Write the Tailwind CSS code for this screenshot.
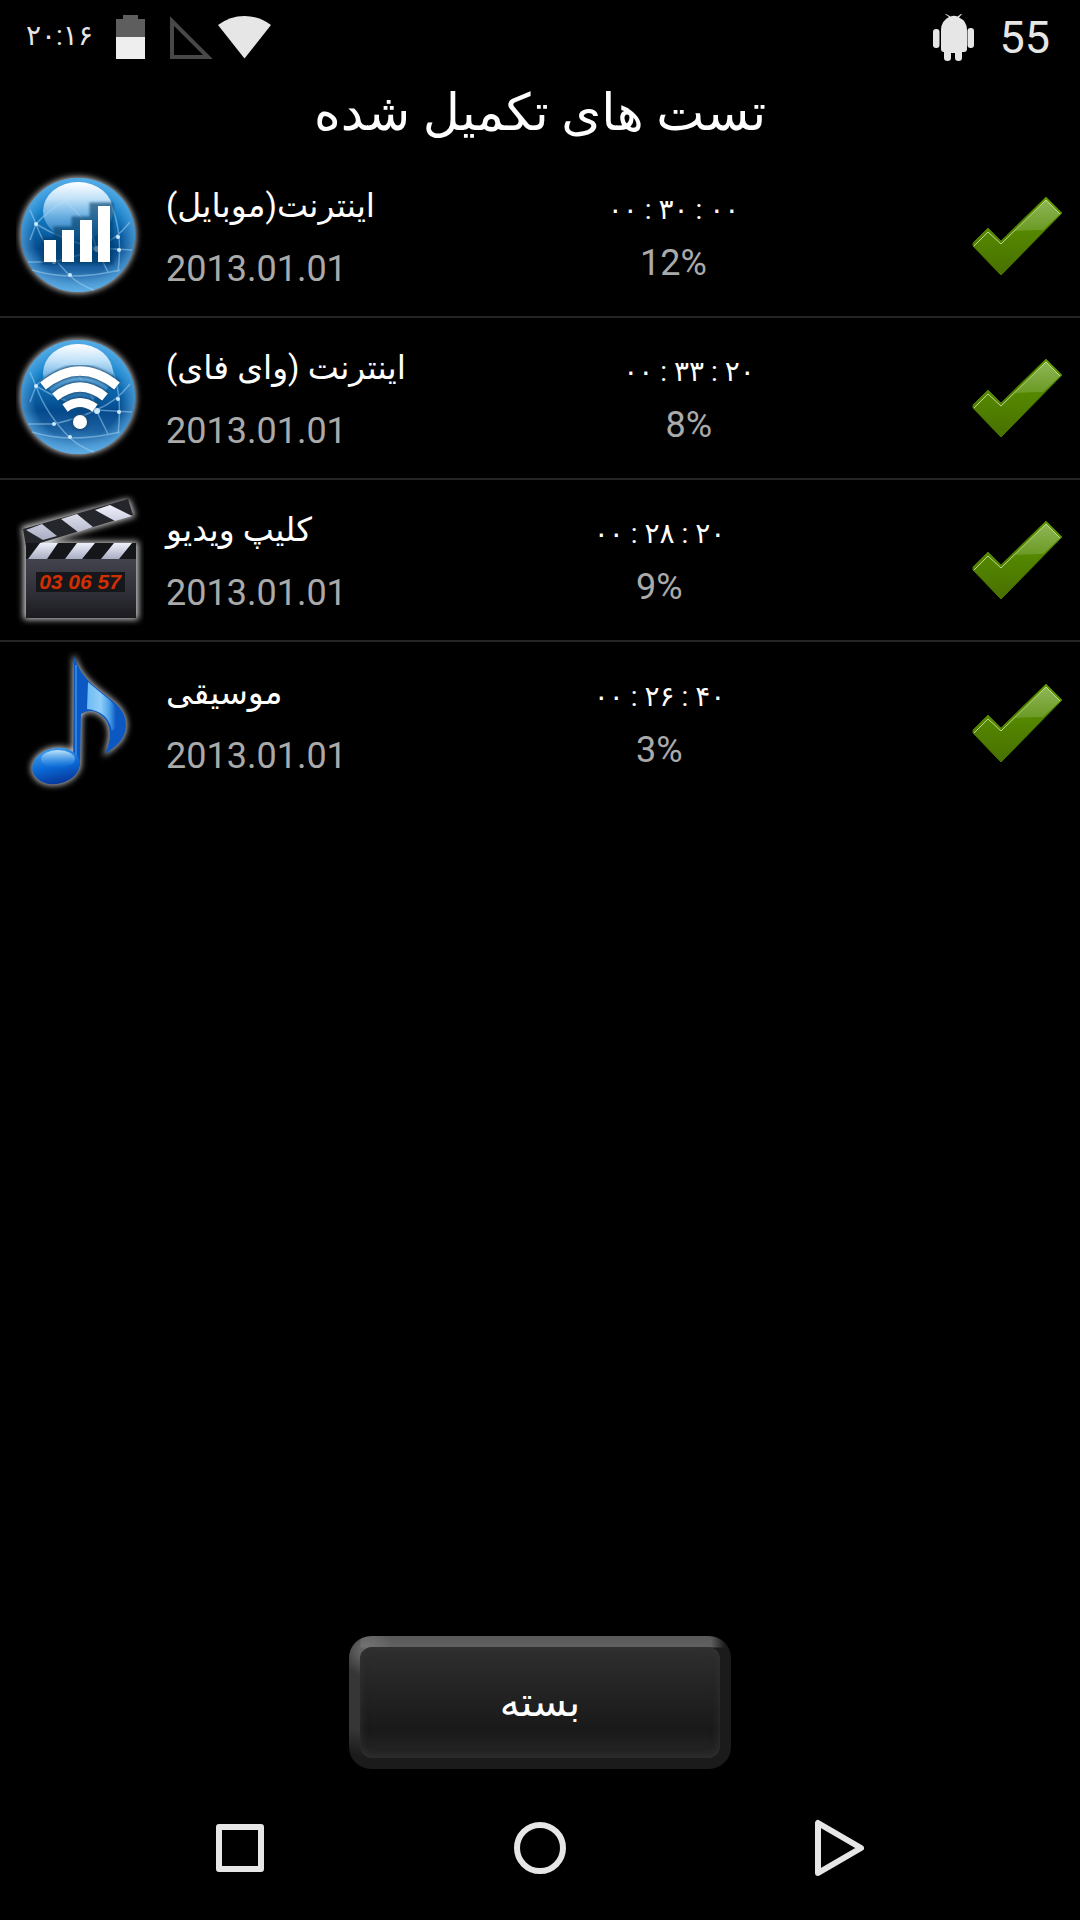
<!DOCTYPE html>
<html lang="fa">
<head>
    <meta charset="UTF-8">
    <meta name="viewport" content="width=device-width, initial-scale=1.0">
    <title>تست های تکمیل شده</title>
    <script src="https://cdn.jsdelivr.net/npm/@tailwindcss/browser@4"></script>
</head>
<body class="bg-black text-white font-[Roboto,'DejaVu_Sans',sans-serif]">

    <!-- Shared shapes -->
    <svg class="absolute size-0" aria-hidden="true">
        <defs>
            <linearGradient id="sphere" x1="0" y1="0" x2="0" y2="1">
                <stop offset="0" stop-color="#3fa3e2"/>
                <stop offset=".3" stop-color="#1580c8"/>
                <stop offset=".62" stop-color="#03498c"/>
                <stop offset=".8" stop-color="#1d63a3"/>
                <stop offset="1" stop-color="#5ba8e0"/>
            </linearGradient>
            <radialGradient id="rim">
                <stop offset=".75" stop-color="#5fb0e8" stop-opacity="0"/>
                <stop offset="1" stop-color="#5fb0e8" stop-opacity=".65"/>
            </radialGradient>
            <linearGradient id="gloss" x1="0" y1="0" x2="0" y2="1">
                <stop offset="0" stop-color="#fff"/>
                <stop offset=".3" stop-color="#c6e4fa" stop-opacity=".95"/>
                <stop offset="1" stop-color="#4fa0de" stop-opacity=".3"/>
            </linearGradient>
            <linearGradient id="tick" x1="0" y1="0" x2="0" y2="1">
                <stop offset="0" stop-color="#5f9a00"/>
                <stop offset="1" stop-color="#487000"/>
            </linearGradient>
            <linearGradient id="tickShine" x1="0" y1="0" x2="0" y2="1">
                <stop offset="0" stop-color="#8eb656"/>
                <stop offset="1" stop-color="#6b9a24"/>
            </linearGradient>
            <linearGradient id="board" x1="0" y1="0" x2="0" y2="1">
                <stop offset="0" stop-color="#4b4c56"/>
                <stop offset=".7" stop-color="#2d2e35"/>
                <stop offset="1" stop-color="#1b1b20"/>
            </linearGradient>
            <linearGradient id="stripe" x1="0" y1="0" x2="0" y2="1">
                <stop offset="0" stop-color="#eef0fb"/>
                <stop offset="1" stop-color="#a9adc2"/>
            </linearGradient>
            <linearGradient id="flag" x1="0" y1="0" x2="1" y2="0">
                <stop offset="0" stop-color="#6cbcf4"/>
                <stop offset=".4" stop-color="#8fcdf8"/>
                <stop offset=".65" stop-color="#4da3ea"/>
                <stop offset=".85" stop-color="#0c58c2"/>
            </linearGradient>
            <linearGradient id="noteHead" x1="0" y1="0" x2="0" y2="1">
                <stop offset="0" stop-color="#3d9bea"/>
                <stop offset=".5" stop-color="#0b6ad6"/>
                <stop offset="1" stop-color="#06369a"/>
            </linearGradient>
            <linearGradient id="headShine" x1="0" y1="0" x2="0" y2="1">
                <stop offset="0" stop-color="#c4e4fb"/>
                <stop offset="1" stop-color="#3d9bea" stop-opacity="0"/>
            </linearGradient>
            <filter id="glow" x="-20%" y="-20%" width="140%" height="140%">
                <feGaussianBlur stdDeviation="3"/>
            </filter>
            <filter id="soft" x="-10%" y="-10%" width="120%" height="120%">
                <feGaussianBlur stdDeviation="1"/>
            </filter>

            <symbol id="globe" viewBox="0 0 128 144">
                <circle cx="62" cy="71" r="58" fill="#ccc" filter="url(#glow)"/>
                <circle cx="62" cy="71" r="57" fill="url(#sphere)"/>
                <circle cx="62" cy="71" r="57" fill="url(#rim)"/>
                <g fill="none" stroke="#a5d6f5" stroke-width="1.5" opacity=".5">
                    <path d="M20 60Q30 88 54 112Q64 121 78 126M20 60Q42 36 76 25M20 60Q46 76 80 84L116 86M14 76L20 60L14 46M12 98L38 98Q64 92 80 84Q100 76 114 58M16 106Q54 118 104 106M80 84L92 108M48 36Q76 60 80 84M102 108Q108 60 90 32"/>
                </g>
                <g fill="#cdeafd">
                    <circle cx="20" cy="60" r="2"/>
                    <circle cx="102" cy="73" r="2"/>
                    <circle cx="103" cy="86" r="2"/>
                    <circle cx="54" cy="111" r="2"/>
                    <circle cx="38" cy="98" r="2"/>
                    <circle cx="81" cy="85" r="3"/>
                </g>
                <ellipse cx="62" cy="47" rx="35" ry="29" fill="url(#gloss)"/>
            </symbol>

            <symbol id="check" viewBox="0 0 92 80">
                <path d="M74 1L90 17L29 79L1 50V47L16 32L29 45Z" fill="url(#tick)" stroke="#4a7800" stroke-width="1" stroke-linejoin="round"/>
                <path d="M74 4L88 18L71 34Q56 34 43 35Z" fill="url(#tickShine)"/>
                <path d="M2 50L16 36L29 48L74 4L88 18" fill="none" stroke="#cfe3a8" stroke-width="1" opacity=".85"/>
            </symbol>
        </defs>
    </svg>

    <div class="flex min-h-screen flex-col">

        <!-- Status bar -->
        <header class="flex h-[76px] items-center justify-between pr-[30px] pl-[26px]">
            <div class="flex items-center">
                <time class="w-[90px] pb-1 text-[28px] leading-9 text-[#e6e6e6]">۲۰:۱۶</time>
                <svg class="h-[46px] w-[30px]" viewBox="0 0 30 46">
                    <path d="M7 0H22V4H29V22H0V4H7Z" fill="#5e5e5e"/>
                    <path d="M0 22H29V44H0Z" fill="#eee"/>
                </svg>
                <svg class="ml-6 h-[46px] w-[43px]" viewBox="0 0 43 46">
                    <path d="M2 6V42H38Z" fill="none" stroke="#484848" stroke-width="4"/>
                </svg>
                <svg class="ml-[5px] h-[46px] w-[54px]" viewBox="0 0 54 46">
                    <path d="M0 10Q12 1 26.500 1T53 10L26.500 43.500Z" fill="#e6e6e6"/>
                </svg>
            </div>
            <div class="flex items-center gap-6 text-[#e6e6e6]">
                <svg class="h-12 w-[42px]" viewBox="0 0 42 48" fill="currentColor">
                    <path d="M8 16Q8 7 16 3L12 0L13 0L17.500 2.500Q21 1 24.500 2.500L28 0L29 0L26 3.500Q34 7 34 16V35Q34 38 31 38H29V44Q29 47 25.500 47T22 44V39H18V44Q18 47 14.500 47T11 44V38Q8 38 8 35Z"/>
                    <rect x="0" y="15" width="6.500" height="19" rx="3"/>
                    <rect x="34.500" y="14" width="6.500" height="20" rx="3"/>
                </svg>
                <span class="text-[45px] leading-[46px]">55</span>
            </div>
        </header>

        <h1 dir="rtl" class="h-20 text-center text-[51px] leading-[74px]">تست های تکمیل شده</h1>

        <!-- Completed tests -->
        <main class="flex-1">
            <ul class="divide-y-2 divide-[#252525]">
                <li class="flex h-[162px] items-center px-4">
                    <svg class="h-36 w-32 shrink-0" viewBox="0 0 128 144">
                        <use href="#globe"/>
                        <path d="M28 76H40V65H58V55H76V41H95V98H28Z" fill="#063b66" stroke="#063b66" stroke-width="5" opacity=".6" filter="url(#soft)"/>
                        <path d="M28 76H40V98H28ZM46 66H58V98H46ZM64 56H76V98H64ZM82 42H94V98H82Z" fill="#fff"/>
                    </svg>
                    <div class="ml-[22px]">
                        <h2 dir="rtl" class="text-left text-[33px] leading-[66px]">اینترنت(موبایل)</h2>
                        <p class="text-4xl leading-[60px] text-[#aaa]">2013.01.01</p>
                    </div>
                    <div class="flex-1 text-center">
                        <p class="text-[28px] leading-[54px]">۰۰ : ۳۰ : ۰۰</p>
                        <p class="text-4xl leading-[52px] text-[#aaa]">12%</p>
                    </div>
                    <svg class="h-20 w-[92px] shrink-0"><use href="#check"/></svg>
                </li>
                <li class="flex h-[162px] items-center px-4">
                    <svg class="h-36 w-32 shrink-0" viewBox="0 0 128 144">
                        <use href="#globe"/>
                        <g fill="none" stroke="#174a73" stroke-width="12" opacity=".8" filter="url(#soft)">
                            <path d="M27 60Q64 30 101 60M39 71Q64 51 89 71M49 82Q64 71 79 82"/>
                            <circle cx="64" cy="96" r="3"/>
                        </g>
                        <path d="M27 60Q64 30 101 60M39 71Q64 51 89 71M49 82Q64 71 79 82" fill="none" stroke="#fff" stroke-width="9"/>
                        <circle cx="64" cy="96" r="7" fill="#fff"/>
                    </svg>
                    <div class="ml-[22px]">
                        <h2 dir="rtl" class="text-left text-[33px] leading-[66px]">اینترنت (وای فای)</h2>
                        <p class="text-4xl leading-[60px] text-[#aaa]">2013.01.01</p>
                    </div>
                    <div class="flex-1 text-center">
                        <p class="text-[28px] leading-[54px]">۰۰ : ۳۳ : ۲۰</p>
                        <p class="text-4xl leading-[52px] text-[#aaa]">8%</p>
                    </div>
                    <svg class="h-20 w-[92px] shrink-0"><use href="#check"/></svg>
                </li>
                <li class="flex h-[162px] items-center px-4">
                    <svg class="h-36 w-32 shrink-0" viewBox="0 0 128 144">
                        <path d="M6 39L113 11L119 28L30 54H122V131H8V56Z" fill="#ccc" stroke="#ccc" stroke-width="1" filter="url(#glow)"/>
                        <path d="M7 41L112 11L117 27L24 55L10 59Z" fill="#25262b"/>
                        <path d="M10 42L26 36L41 48L27 52ZM45 31L61 26L77 39L62 44ZM79 22L94 17L116 28L99 33Z" fill="url(#stripe)"/>
                        <path d="M10 55H120V130H10Z" fill="url(#board)"/>
                        <path d="M10 55H120V71H10Z" fill="#15161a"/>
                        <path d="M24 55H42L31 71H12ZM61 55H79L66 71H49ZM98 55H116L103 71H85Z" fill="url(#stripe)"/>
                        <path d="M20 84H109V104H20Z" fill="#15171a"/>
                        <text x="64" y="101" text-anchor="middle" class="fill-[#d02f04] font-['Liberation_Sans'] text-[21px] font-bold italic">03 06 57</text>
                    </svg>
                    <div class="ml-[22px]">
                        <h2 dir="rtl" class="text-left text-[33px] leading-[66px]">کلیپ ویدیو</h2>
                        <p class="text-4xl leading-[60px] text-[#aaa]">2013.01.01</p>
                    </div>
                    <div class="flex-1 text-center">
                        <p class="text-[28px] leading-[54px]">۰۰ : ۲۸ : ۲۰</p>
                        <p class="text-4xl leading-[52px] text-[#aaa]">9%</p>
                    </div>
                    <svg class="h-20 w-[92px] shrink-0"><use href="#check"/></svg>
                </li>
                <li class="flex h-[162px] items-center px-4">
                    <svg class="h-36 w-32 shrink-0" viewBox="0 0 128 144">
                        <g fill="#ccc" stroke="#ccc" stroke-width="2" filter="url(#glow)">
                            <path d="M58 5C64 24 76 34 88 43C102 54 110 60 110 75C109 90 99 96 89 103C97 85 94 71 86 65Q76 56 65 63L64 115H57Z"/>
                            <ellipse cx="40" cy="115" rx="24" ry="18" transform="rotate(-12 40 115)"/>
                        </g>
                        <path d="M58 5C64 24 76 34 88 43C102 54 110 60 110 75C109 90 99 96 89 103C97 85 94 71 86 65Q76 56 65 63L64 115H57Z" fill="#0c58c2"/>
                        <path d="M72 31Q80 38 90 46Q101 54 105 66Q101 76 96 80Q92 60 71 58Z" fill="url(#flag)"/>
                        <path d="M60 14V112" stroke="#2f83de" stroke-width="2"/>
                        <ellipse cx="40" cy="115" rx="24" ry="18" fill="url(#noteHead)" transform="rotate(-12 40 115)"/>
                        <ellipse cx="42" cy="108" rx="17" ry="9" fill="url(#headShine)"/>
                    </svg>
                    <div class="ml-[22px]">
                        <h2 dir="rtl" class="text-left text-[33px] leading-[66px]">موسیقی</h2>
                        <p class="text-4xl leading-[60px] text-[#aaa]">2013.01.01</p>
                    </div>
                    <div class="flex-1 text-center">
                        <p class="text-[28px] leading-[54px]">۰۰ : ۲۶ : ۴۰</p>
                        <p class="text-4xl leading-[52px] text-[#aaa]">3%</p>
                    </div>
                    <svg class="h-20 w-[92px] shrink-0"><use href="#check"/></svg>
                </li>
            </ul>
        </main>

        <!-- Close button: bevelled frame around a darker face -->
        <button class="mx-auto mb-[7px] w-[382px] rounded-[22px] bg-[radial-gradient(circle_at_18px_14px,#747474,transparent_26px),radial-gradient(circle_at_0_100%,#1b1b1b_16px,transparent_40px),linear-gradient(to_right,#363636_11px,transparent_12px),linear-gradient(to_right,transparent_362px,#1b1b1b_376px),linear-gradient(to_bottom,#595959,#616161_11px,#1b1b1b_12px)] p-[11px]">
            <span dir="rtl" class="block rounded-xl bg-linear-to-b from-[#2f2f2f] via-[#191919] via-75% to-[#272727] text-[40px] leading-[111px] shadow-[inset_0_0_8px_#333]">بسته</span>
        </button>

        <!-- Navigation bar -->
        <nav class="mx-auto grid h-36 w-5/6 grid-cols-3 place-items-center">
            <button aria-label="برنامه ها">
                <svg class="size-15" viewBox="0 0 60 60" fill="none" stroke="#e6e6e6" stroke-width="6" stroke-linejoin="round"><path d="M9 9H51V51H9Z"/></svg>
            </button>
            <button aria-label="خانه">
                <svg class="size-15" viewBox="0 0 60 60" fill="none" stroke="#e6e6e6" stroke-width="6"><circle cx="30" cy="30" r="23"/></svg>
            </button>
            <button aria-label="بازگشت">
                <svg class="size-15" viewBox="0 0 60 60" fill="none" stroke="#e6e6e6" stroke-width="6" stroke-linejoin="round"><path d="M8 5V55L51 30Z"/></svg>
            </button>
        </nav>
    </div>

</body>
</html>
